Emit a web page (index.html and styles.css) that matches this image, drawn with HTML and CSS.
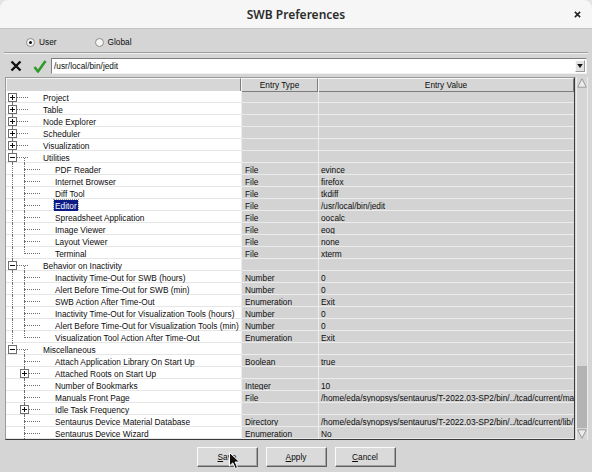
FILE: index.html
```html
<!DOCTYPE html>
<html lang="en">
<head>
    <meta charset="UTF-8">
    <title>SWB Preferences</title>
    <link rel="stylesheet" href="styles.css">
</head>
<body>

<div class="dialog">
    <div class="titlebar">
        <h1>SWB Preferences</h1>
        <svg class="close" viewBox="0 0 8 8"><path d="M1 1L7 7M7 1L1 7" stroke="#222" stroke-width="1.8"/></svg>
    </div>

    <div class="scope">
        <label class="radio"><span class="dot on"></span>User</label>
        <label class="radio"><span class="dot"></span>Global</label>
    </div>
    <div class="groove"></div>

    <div class="toolbar">
        <svg class="tool-x" viewBox="0 0 12 12"><path d="M1.5 1.5L10.5 10.5M10.5 1.5L1.5 10.5" stroke="#111" stroke-width="2.4"/></svg>
        <svg class="tool-ok" viewBox="0 0 14 14"><path d="M1.5 8L5 12.5L12.5 2" fill="none" stroke="#2f9a28" stroke-width="2.6" stroke-linejoin="round"/></svg>
        <div class="path">
            <span>/usr/local/bin/jedit</span>
            <span class="combo"><svg viewBox="0 0 7 5"><path d="M0 0H7L3.5 5Z" fill="#111"/></svg></span>
        </div>
    </div>

    <div class="grid-wrap">
        <div class="tree">
            <div class="head">
                <span></span>
                <span>Entry Type</span>
                <span>Entry Value</span>
            </div>

            <div class="row"><div class="name"><span class="g bot h"><span class="bx plus"></span></span><span class="lbl">Project</span></div><div class="type"></div><div class="val"></div></div>
            <div class="row"><div class="name"><span class="g v h"><span class="bx plus"></span></span><span class="lbl">Table</span></div><div class="type"></div><div class="val"></div></div>
            <div class="row"><div class="name"><span class="g v h"><span class="bx plus"></span></span><span class="lbl">Node Explorer</span></div><div class="type"></div><div class="val"></div></div>
            <div class="row"><div class="name"><span class="g v h"><span class="bx plus"></span></span><span class="lbl">Scheduler</span></div><div class="type"></div><div class="val"></div></div>
            <div class="row"><div class="name"><span class="g v h"><span class="bx plus"></span></span><span class="lbl">Visualization</span></div><div class="type"></div><div class="val"></div></div>
            <div class="row"><div class="name"><span class="g v h"><span class="bx"></span><span class="sub"></span></span><span class="lbl">Utilities</span></div><div class="type"></div><div class="val"></div></div>
            <div class="row"><div class="name"><span class="g v"></span><span class="g v h"></span><span class="lbl">PDF Reader</span></div><div class="type">File</div><div class="val">evince</div></div>
            <div class="row"><div class="name"><span class="g v"></span><span class="g v h"></span><span class="lbl">Internet Browser</span></div><div class="type">File</div><div class="val">firefox</div></div>
            <div class="row"><div class="name"><span class="g v"></span><span class="g v h"></span><span class="lbl">Diff Tool</span></div><div class="type">File</div><div class="val">tkdiff</div></div>
            <div class="row"><div class="name"><span class="g v"></span><span class="g v h"></span><span class="lbl sel">Editor</span></div><div class="type">File</div><div class="val">/usr/local/bin/jedit</div></div>
            <div class="row"><div class="name"><span class="g v"></span><span class="g v h"></span><span class="lbl">Spreadsheet Application</span></div><div class="type">File</div><div class="val">oocalc</div></div>
            <div class="row"><div class="name"><span class="g v"></span><span class="g v h"></span><span class="lbl">Image Viewer</span></div><div class="type">File</div><div class="val">eog</div></div>
            <div class="row"><div class="name"><span class="g v"></span><span class="g v h"></span><span class="lbl">Layout Viewer</span></div><div class="type">File</div><div class="val">none</div></div>
            <div class="row"><div class="name"><span class="g v"></span><span class="g top h"></span><span class="lbl">Terminal</span></div><div class="type">File</div><div class="val">xterm</div></div>
            <div class="row"><div class="name"><span class="g v h"><span class="bx"></span><span class="sub"></span></span><span class="lbl">Behavior on Inactivity</span></div><div class="type"></div><div class="val"></div></div>
            <div class="row"><div class="name"><span class="g v"></span><span class="g v h"></span><span class="lbl">Inactivity Time-Out for SWB (hours)</span></div><div class="type">Number</div><div class="val">0</div></div>
            <div class="row"><div class="name"><span class="g v"></span><span class="g v h"></span><span class="lbl">Alert Before Time-Out for SWB (min)</span></div><div class="type">Number</div><div class="val">0</div></div>
            <div class="row"><div class="name"><span class="g v"></span><span class="g v h"></span><span class="lbl">SWB Action After Time-Out</span></div><div class="type">Enumeration</div><div class="val">Exit</div></div>
            <div class="row"><div class="name"><span class="g v"></span><span class="g v h"></span><span class="lbl">Inactivity Time-Out for Visualization Tools (hours)</span></div><div class="type">Number</div><div class="val">0</div></div>
            <div class="row"><div class="name"><span class="g v"></span><span class="g v h"></span><span class="lbl">Alert Before Time-Out for Visualization Tools (min)</span></div><div class="type">Number</div><div class="val">0</div></div>
            <div class="row"><div class="name"><span class="g v"></span><span class="g top h"></span><span class="lbl">Visualization Tool Action After Time-Out</span></div><div class="type">Enumeration</div><div class="val">Exit</div></div>
            <div class="row"><div class="name"><span class="g top h"><span class="bx"></span><span class="sub"></span></span><span class="lbl">Miscellaneous</span></div><div class="type"></div><div class="val"></div></div>
            <div class="row"><div class="name"><span class="g"></span><span class="g v h"></span><span class="lbl">Attach Application Library On Start Up</span></div><div class="type">Boolean</div><div class="val">true</div></div>
            <div class="row"><div class="name"><span class="g"></span><span class="g v h"><span class="bx plus"></span></span><span class="lbl">Attached Roots on Start Up</span></div><div class="type"></div><div class="val"></div></div>
            <div class="row"><div class="name"><span class="g"></span><span class="g v h"></span><span class="lbl">Number of Bookmarks</span></div><div class="type">Integer</div><div class="val">10</div></div>
            <div class="row"><div class="name"><span class="g"></span><span class="g v h"></span><span class="lbl">Manuals Front Page</span></div><div class="type">File</div><div class="val">/home/eda/synopsys/sentaurus/T-2022.03-SP2/bin/../tcad/current/ma</div></div>
            <div class="row"><div class="name"><span class="g"></span><span class="g v h"><span class="bx plus"></span></span><span class="lbl">Idle Task Frequency</span></div><div class="type"></div><div class="val"></div></div>
            <div class="row"><div class="name"><span class="g"></span><span class="g v h"></span><span class="lbl">Sentaurus Device Material Database</span></div><div class="type">Directory</div><div class="val">/home/eda/synopsys/sentaurus/T-2022.03-SP2/bin/../tcad/current/lib/</div></div>
            <div class="row"><div class="name"><span class="g"></span><span class="g v h"></span><span class="lbl">Sentaurus Device Wizard</span></div><div class="type">Enumeration</div><div class="val">No</div></div>
        </div>

        <div class="scrollbar">
            <span class="sb-btn"><svg viewBox="0 0 10 10"><path d="M5 0.8L9.3 9.2H0.7Z" fill="#ececec" stroke="#9a9a9a"/></svg></span>
            <span class="sb-track"><span class="sb-thumb"></span></span>
            <span class="sb-btn"><svg viewBox="0 0 10 10"><path d="M5 9.2L9.3 0.8H0.7Z" fill="#ececec" stroke="#9a9a9a"/></svg></span>
        </div>
    </div>

    <div class="actions">
        <button class="btn"><u>S</u>ave</button>
        <button class="btn"><u>A</u>pply</button>
        <button class="btn"><u>C</u>ancel</button>
    </div>

    <!-- mouse pointer resting on the Save button -->
    <svg class="pointer" viewBox="0 0 12 18"><path d="M0.5 0.5V14L3.8 10.9L6.3 16.5L8.6 15.5L6.1 10H10.6Z" fill="#111" stroke="#fff" stroke-width="1"/></svg>
</div>

</body>
</html>
```

FILE: styles.css
```css
* {
    box-sizing: border-box;
}

body {
    margin: 0;
    background: #e4e4e4;
    font-family: "Liberation Sans", Arial, sans-serif;
    font-size: 8.3px;
    color: #0c0c0c;
}

.dialog {
    position: relative;
    width: 592px;
    height: 472px;
    background: #d5d5d5;
    border-radius: 8px 8px 0 0;
    overflow: hidden;
}

/* window title */
.titlebar {
    height: 29px;
    background: #f6f6f6;
    border-bottom: 1px solid #c4c4c4;
    display: grid;
    grid-template-columns: 1fr auto 1fr;
    align-items: center;
}

.titlebar h1 {
    grid-column: 2;
    margin: 0;
    font: 600 12px "Noto Sans", sans-serif;
    color: #2c2c2c;
}

.close {
    grid-column: 3;
    justify-self: end;
    margin-right: 11px;
    width: 7px;
    height: 7px;
}

/* user / global switch */
.scope {
    height: 23px;
    display: flex;
    align-items: center;
    padding: 3px 0 0 26px;
}

.radio {
    display: flex;
    align-items: center;
    gap: 4px;
    margin-right: 38px;
}

.dot {
    width: 9px;
    height: 9px;
    border-radius: 50%;
    border: 1px solid #8c8c8c;
    background: #f6f6f6;
    display: flex;
    align-items: center;
    justify-content: center;
}

.dot.on::after {
    content: "";
    width: 3px;
    height: 3px;
    border-radius: 50%;
    background: #111;
}

.groove {
    margin: 0 4px;
    border-top: 1px solid #9c9c9c;
    border-bottom: 1px solid #f2f2f2;
}

/* edit bar */
.toolbar {
    height: 23px;
    display: flex;
    align-items: center;
    padding: 0 5px 0 10px;
}

.tool-x {
    width: 12px;
    height: 12px;
}

.tool-ok {
    width: 14px;
    height: 14px;
    margin-left: 11px;
    margin-right: 4px;
}

.path {
    flex: 1;
    height: 16px;
    background: #fff;
    border: 1px solid;
    border-color: #7e7e7e #efefef #efefef #7e7e7e;
    display: flex;
    align-items: center;
    padding-left: 2px;
}

.combo {
    margin-left: auto;
    margin-right: 1px;
    width: 10px;
    height: 12px;
    background: #e2e2e2;
    border: 1px solid;
    border-color: #fafafa #9a9a9a #9a9a9a #fafafa;
    display: flex;
    align-items: center;
    justify-content: center;
}

.combo svg {
    width: 6px;
    height: 4px;
}

/* preference tree */
.grid-wrap {
    display: flex;
    margin-left: 5px;
    height: 363px;
}

.tree {
    width: 570px;
    border: 1px solid;
    border-color: #9a9a9a #3a3a3a #3a3a3a #9a9a9a;
    background: #d3d3d3;
    overflow: hidden;
}

.head,
.row {
    display: grid;
    grid-template-columns: 235px 77px 1fr;
}

.head {
    height: 13px;
}

.head span {
    border: 1px solid;
    border-color: #f6f6f6 #7c7c7c #7c7c7c #f6f6f6;
    background: #d6d6d6;
    text-align: center;
    line-height: 11px;
    padding-top: 1px;
}

.row {
    height: 12px;
}

.name {
    background: #fff;
    border-bottom: 1px solid #e6e6e6;
    display: flex;
    align-items: stretch;
    white-space: nowrap;
}

.type,
.val {
    border-left: 1px solid #ededed;
    border-bottom: 1px solid #ebebeb;
    padding: 3px 0 0 3px;
    line-height: 8px;
    white-space: nowrap;
    overflow: hidden;
}

.val {
    padding-left: 2px;
}

.lbl {
    margin-left: 25px;
    padding-top: 3px;
    line-height: 8px;
}

.lbl.sel {
    margin: 1px 0 -1px 24px;
    padding: 2px 1px 0;
    background: #0b1a86;
    color: #fff;
    outline: 1px dotted #9a9a9a;
}

/* tree guide lines, one 12px slot per level */
.g {
    position: relative;
    width: 12px;
    flex-shrink: 0;
}

.g.v::before,
.g.top::before,
.g.bot::before,
.sub {
    content: "";
    position: absolute;
    left: 6px;
    border-left: 1px dotted #6e6e6e;
}

.g.v::before {
    top: 0;
    bottom: -1px;
}

.g.top::before {
    top: 0;
    height: 7px;
}

.g.bot::before {
    top: 6px;
    bottom: -1px;
}

.sub {
    left: 18px;
    top: 7px;
    bottom: -1px;
}

.g.h::after {
    content: "";
    position: absolute;
    left: 6px;
    top: 6px;
    width: 16px;
    border-top: 1px dotted #6e6e6e;
}

.bx {
    position: absolute;
    z-index: 1;
    left: 2px;
    top: 2px;
    width: 9px;
    height: 9px;
    border: 1px solid #6e6e6e;
    background: #fff;
}

.bx::before {
    content: "";
    position: absolute;
    left: 1px;
    top: 3px;
    width: 5px;
    height: 1px;
    background: #111;
}

.bx.plus::after {
    content: "";
    position: absolute;
    left: 3px;
    top: 1px;
    width: 1px;
    height: 5px;
    background: #111;
}

/* vertical scrollbar */
.scrollbar {
    width: 12px;
    margin-left: 1px;
    display: flex;
    flex-direction: column;
    border-left: 1px solid #ececec;
    border-right: 1px solid #ececec;
    background: #d6d6d6;
}

.sb-btn {
    height: 12px;
    display: flex;
    align-items: center;
    justify-content: center;
}

.sb-btn svg {
    width: 10px;
    height: 10px;
}

.sb-track {
    flex: 1;
    display: flex;
    flex-direction: column;
    justify-content: flex-end;
}

.sb-thumb {
    height: 62px;
    background: #b3b3b3;
}

/* dialog buttons */
.actions {
    display: flex;
    justify-content: center;
    gap: 8px;
    margin-top: 7px;
}

.btn {
    width: 61px;
    height: 20px;
    padding: 0;
    font: inherit;
    color: inherit;
    background: #dadada;
    border: 1px solid;
    border-color: #fbfbfb #5e5e5e #5e5e5e #fbfbfb;
    box-shadow: inset -1px -1px 0 #a4a4a4;
}

.pointer {
    position: absolute;
    left: 229px;
    top: 452px;
    width: 12px;
    height: 18px;
}
```
